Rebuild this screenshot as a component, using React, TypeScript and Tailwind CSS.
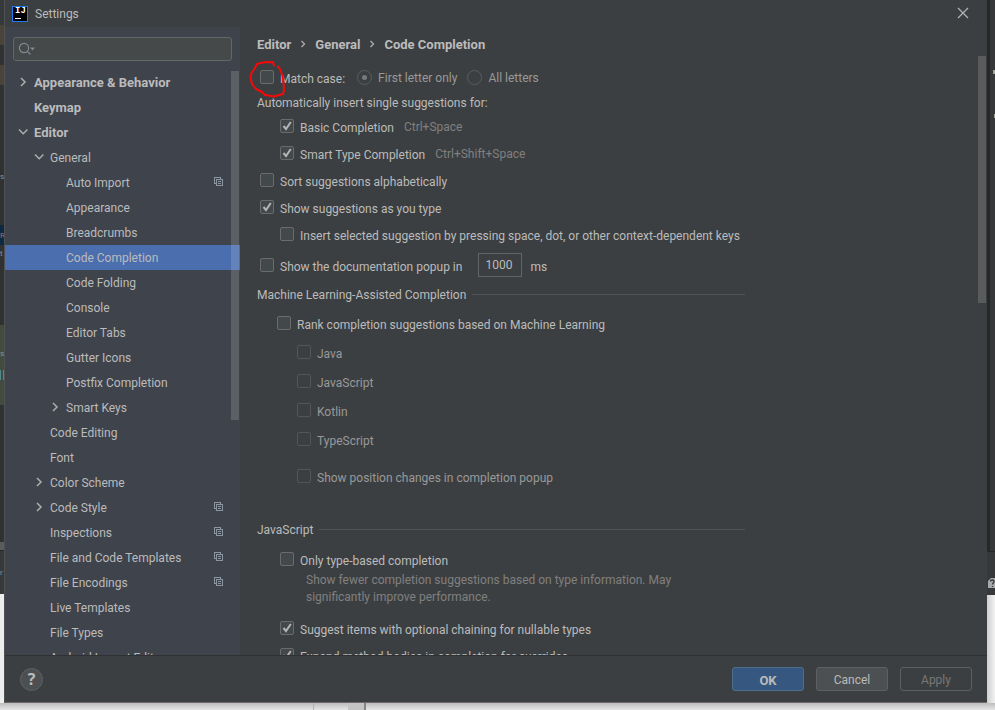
import type { ReactNode } from "react";

type TreeItem = {
  label: string;
  level: 0 | 1 | 2;
  arrow?: "open" | "closed";
  selected?: boolean;
  perProject?: boolean;
};

const treeItems: TreeItem[] = [
  { label: "Appearance & Behavior", level: 0, arrow: "closed" },
  { label: "Keymap", level: 0 },
  { label: "Editor", level: 0, arrow: "open" },
  { label: "General", level: 1, arrow: "open" },
  { label: "Auto Import", level: 2, perProject: true },
  { label: "Appearance", level: 2 },
  { label: "Breadcrumbs", level: 2 },
  { label: "Code Completion", level: 2, selected: true },
  { label: "Code Folding", level: 2 },
  { label: "Console", level: 2 },
  { label: "Editor Tabs", level: 2 },
  { label: "Gutter Icons", level: 2 },
  { label: "Postfix Completion", level: 2 },
  { label: "Smart Keys", level: 2, arrow: "closed" },
  { label: "Code Editing", level: 1 },
  { label: "Font", level: 1 },
  { label: "Color Scheme", level: 1, arrow: "closed" },
  { label: "Code Style", level: 1, arrow: "closed", perProject: true },
  { label: "Inspections", level: 1, perProject: true },
  { label: "File and Code Templates", level: 1, perProject: true },
  { label: "File Encodings", level: 1, perProject: true },
  { label: "Live Templates", level: 1 },
  { label: "File Types", level: 1 },
  { label: "Android Layout Editor", level: 1 },
];

const indents = ["pl-3", "pl-7", "pl-11"];

function Arrow({ dir }: { dir: "open" | "closed" }) {
  return (
    <svg width="12" height="12" viewBox="0 0 12 12" fill="none" stroke="#adadad" strokeWidth="1.5">
      <path d={dir === "open" ? "M2 3.5 6.2 7.7 10.4 3.5" : "M4 2 8 6 4 10"} />
    </svg>
  );
}

function ProjectIcon() {
  return (
    <svg width="9" height="9" viewBox="0 0 9 9" fill="none" stroke="#8b959f" shapeRendering="crispEdges">
      <path d="M2 6.5H.5V.5H6.5V2" />
      <path d="M2.5 2.5H8.5V8.5H2.5ZM4 4.5H7M4 6.5H7" />
    </svg>
  );
}

function TreeRow({ item }: { item: TreeItem }) {
  return (
    <li>
      <a
        href="#"
        className={`flex h-[25px] items-center pr-[17px] ${indents[item.level]} ${item.selected ? "bg-[#4b6eaf]" : ""}`}
      >
        <span className="mb-0.5 w-[17px] shrink-0">{item.arrow && <Arrow dir={item.arrow} />}</span>
        <span className={`flex-1 whitespace-nowrap ${item.level === 0 ? "text-[13px] font-bold" : "pt-0.5"}`}>
          {item.label}
        </span>
        {item.perProject && (
          <span className="mb-0.5">
            <ProjectIcon />
          </span>
        )}
      </a>
    </li>
  );
}

type CheckProps = {
  children: ReactNode;
  checked?: boolean;
  disabled?: boolean;
  className?: string;
};

function Check({ children, checked, disabled, className = "h-[27px]" }: CheckProps) {
  return (
    <label className={`flex items-center gap-1.5 whitespace-nowrap ${disabled ? "text-[#999999]" : ""} ${className}`}>
      <span className="mb-[3px] grid">
        <input
          type="checkbox"
          defaultChecked={checked}
          disabled={disabled}
          className="peer col-start-1 row-start-1 size-3.5 appearance-none rounded-[2px] border border-[#6b6b6b] bg-[#43494a] disabled:border-[#545556] disabled:bg-[#3c3f41]"
        />
        <svg
          viewBox="0 0 14 14"
          fill="none"
          stroke="#b4b4b4"
          strokeWidth="2"
          className="pointer-events-none invisible col-start-1 row-start-1 size-3.5 peer-checked:visible"
        >
          <path d="M3.5 7 6 10 10.8 3" />
        </svg>
      </span>
      <span className="pt-0.5">{children}</span>
    </label>
  );
}

function Radio({ label, checked }: { label: string; checked?: boolean }) {
  return (
    <label className="flex items-center gap-1.5 whitespace-nowrap text-[#999999]">
      <span className="mb-0.5 grid place-items-center">
        <input
          type="radio"
          name="match-case"
          defaultChecked={checked}
          disabled
          className="peer col-start-1 row-start-1 size-[15px] appearance-none rounded-full border border-[#5a5d5e]"
        />
        <span className="invisible col-start-1 row-start-1 size-[5px] rounded-full bg-[#777a7b] peer-checked:visible" />
      </span>
      {label}
    </label>
  );
}

function SectionTitle({ children }: { children: ReactNode }) {
  return (
    <h2 className="flex h-[23px] items-center gap-1.5 whitespace-nowrap">
      <span className="pt-0.5">{children}</span>
      <span className="h-px flex-1 bg-[#505354]" />
    </h2>
  );
}

function Logo() {
  return (
    <span className="flex size-4 flex-col justify-between border border-[#1a7df0] bg-black px-0.5 pb-0.5">
      <span className="font-['Liberation_Mono',monospace] text-[9px] leading-[9px] font-bold text-white">IJ</span>
      <span className="h-px w-1.5 bg-white" />
    </span>
  );
}

// Sliver of the editor window that shows to the left of the dialog.
function LeftEdge() {
  return (
    <div
      className="flex w-1 shrink-0 flex-col overflow-hidden bg-[#2f3133] text-[8px] text-[#8d9194]"
      aria-hidden="true"
    >
      <div className="h-[25px] shrink-0 bg-[#36393b]" />
      <div className="h-5 shrink-0 bg-[#49433a]" />
      <div className="h-5 shrink-0" />
      <div className="h-5 shrink-0 bg-[#49433a]" />
      <div className="flex h-[140px] shrink-0 items-end pb-10">s</div>
      <div className="flex h-5 shrink-0 items-center bg-[#0e2a43] text-[#c25c66]">R</div>
      <div className="flex h-20 shrink-0">t</div>
      <div className="flex h-20 shrink-0 flex-col bg-[#424c3e] pt-5">
        <span className="flex h-[25px]">s</span>
        <span className="flex h-2.5 gap-0.5">
          <span className="w-px bg-[#4f8b91]" />
          <span className="w-px bg-[#4f8b91]" />
        </span>
      </div>
      <div className="h-[137px] shrink-0" />
      <div className="h-2 shrink-0 bg-[#595b5d]" />
      <div className="flex h-11 shrink-0 items-center border-t border-[#232527] bg-[#36393b]">r</div>
      <div className="flex-1 bg-[#ededed]" />
    </div>
  );
}

function RightEdge() {
  return (
    <div className="flex w-2 shrink-0 flex-col bg-[#36383a]" aria-hidden="true">
      <div className="flex h-[551px] shrink-0 flex-col border-l-[3px] border-[#262727] pt-[70px]">
        <span className="ml-auto h-1 w-0.5 bg-[#a0a39c]" />
        <span className="mt-10 ml-auto h-1 w-px bg-[#a0a39c]" />
      </div>
      <div className="flex h-11 shrink-0 flex-col items-end justify-end border-t border-[#262727] pb-1.5">
        <svg width="8" height="12" viewBox="0 0 8 12">
          <path d="M1 11V4L4 1H8V11Z" fill="#a7a9aa" />
          <path d="M3.5 4.5C3.5 2.5 7 2.5 7 4.5 7 6 5.5 6 5.5 7.5M5.5 9V10" fill="none" stroke="#36383a" strokeWidth="1.3" />
        </svg>
      </div>
      <div className="flex-1 bg-linear-to-r from-[#d0d0d0] to-[#f2f2f2]" />
    </div>
  );
}

function Sidebar() {
  return (
    <aside className="relative flex w-[235px] shrink-0 flex-col bg-[#3f434c] pt-2.5">
      <div className="mx-2 flex h-6 shrink-0 items-center rounded-[3px] border border-[#646767] bg-[#45494a] pl-1">
        <svg width="18" height="14" viewBox="0 0 18 14" fill="none" stroke="#7f8a91" strokeWidth="1.2">
          <circle cx="6" cy="6" r="4.6" />
          <path d="M9.3 9.3 12.5 12.5" />
          <path d="M12 5.5H17L14.5 8.5Z" fill="#7f8a91" stroke="none" />
        </svg>
        <input type="text" aria-label="Search settings" className="min-w-0 flex-1 bg-transparent outline-none" />
      </div>
      <nav className="mt-[9px] min-h-0 flex-1 overflow-hidden">
        <ul>
          {treeItems.map((item) => (
            <TreeRow key={item.label} item={item} />
          ))}
        </ul>
      </nav>
      <div className="absolute top-11 right-px h-[349px] w-2 bg-white/15" />
    </aside>
  );
}

function Crumb({ children }: { children: ReactNode }) {
  return (
    <>
      <li>{children}</li>
      <li aria-hidden="true" className="mb-0.5">
        <svg width="6" height="8" viewBox="0 0 6 8" fill="none" stroke="#adadad" strokeWidth="1.3">
          <path d="M1.5 1 4.5 4 1.5 7" />
        </svg>
      </li>
    </>
  );
}

function CompletionPage() {
  return (
    <main className="relative min-w-0 flex-1 overflow-hidden pl-[17px]">
      <ol className="flex h-[37px] items-center gap-[9px] pb-0.5 text-[13px] font-bold whitespace-nowrap">
        <Crumb>Editor</Crumb>
        <Crumb>General</Crumb>
        <li>Code Completion</li>
      </ol>

      <div className="max-w-[488px]">
        <div className="relative flex items-center pl-[3px]">
          <Check className="h-7">Match case:</Check>
          <div className="ml-3 flex gap-2.5">
            <Radio label="First letter only" checked />
            <Radio label="All letters" />
          </div>
          <svg
            width="40"
            height="40"
            viewBox="0 0 40 40"
            fill="none"
            stroke="#f80808"
            strokeWidth="2"
            strokeLinecap="round"
            strokeLinejoin="round"
            className="pointer-events-none absolute -top-1 -left-2"
          >
            <path d="M25 5.5 24 2 15 2.2 8 4 6 8 2.5 13 1.5 18 3 24 7 29 13 32 16 35 25 36.5 34 34 35 31 34.5 22 33.5 16 31 9 29 6.5" />
          </svg>
        </div>

        <p className="h-[22px] leading-[22px]">Automatically insert single suggestions for:</p>
        <div className="flex items-center gap-2.5 pl-[23px]">
          <Check checked>Basic Completion</Check>
          <span className="text-[#808080]">Ctrl+Space</span>
        </div>
        <div className="flex items-center gap-2.5 pl-[23px]">
          <Check checked>Smart Type Completion</Check>
          <span className="text-[#808080]">Ctrl+Shift+Space</span>
        </div>
        <div className="pl-[3px]">
          <Check>Sort suggestions alphabetically</Check>
          <Check checked>Show suggestions as you type</Check>
        </div>
        <div className="pl-[23px]">
          <Check>Insert selected suggestion by pressing space, dot, or other context-dependent keys</Check>
        </div>
        <div className="flex h-[34px] items-center gap-2 pl-[3px]">
          <Check className="mr-2 h-[27px]">Show the documentation popup in</Check>
          <input
            type="text"
            defaultValue="1000"
            aria-label="Documentation popup delay"
            className="mb-0.5 h-6 w-11 border border-[#646464] bg-transparent px-1.5"
          />
          <span className="pt-0.5">ms</span>
        </div>

        <SectionTitle>Machine Learning-Assisted Completion</SectionTitle>
        <div className="mt-1 pl-5">
          <Check className="h-[29px]">Rank completion suggestions based on Machine Learning</Check>
          <div className="pl-5">
            <Check disabled className="h-[29px]">Java</Check>
            <Check disabled className="h-[29px]">JavaScript</Check>
            <Check disabled className="h-[29px]">Kotlin</Check>
            <Check disabled className="h-[29px]">TypeScript</Check>
            <Check disabled className="mt-2 h-[29px]">Show position changes in completion popup</Check>
          </div>
        </div>

        <div className="mt-[26px]">
          <SectionTitle>JavaScript</SectionTitle>
        </div>
        <div className="mt-2 pl-[23px]">
          <Check className="h-[23px]">Only type-based completion</Check>
          <p className="mb-2.5 max-w-[410px] pl-[26px] leading-[17px] text-[#808080]">
            Show fewer completion suggestions based on type information. May significantly improve performance.
          </p>
          <Check checked>Suggest items with optional chaining for nullable types</Check>
          <Check checked>Expand method bodies in completion for overrides</Check>
        </div>
      </div>

      <div className="absolute top-[29px] right-px h-[247px] w-2 bg-[#595b5d]" />
    </main>
  );
}

export default function App() {
  return (
    <div className="flex h-screen flex-col overflow-hidden bg-[#e4e4e4] font-['Roboto','Noto_Sans_CJK_KR',sans-serif] text-[12px] leading-[17px] text-[#bbbbbb]">
      <div className="flex min-h-0 flex-1">
        <LeftEdge />
        <div className="flex min-w-0 flex-1 flex-col border-b border-l border-b-[#6f696a] border-l-[#4f5152] bg-[#3c3f41]">
          <header className="flex h-[27px] shrink-0 items-center gap-[7px] pr-[18px] pl-[7px]">
            <Logo />
            <h1 className="flex-1 pt-0.5">Settings</h1>
            <button type="button" aria-label="Close" className="mb-0.5">
              <svg width="12" height="12" viewBox="0 0 12 12" stroke="#b4b4b4" strokeWidth="1.2">
                <path d="M1 1 11 11M11 1 1 11" />
              </svg>
            </button>
          </header>

          <div className="flex min-h-0 flex-1">
            <Sidebar />
            <CompletionPage />
          </div>

          <footer className="flex h-[47px] shrink-0 items-center gap-3 border-t border-[#2f3133] pr-[15px] pl-[15px]">
            <button
              type="button"
              aria-label="Help"
              className="mr-auto size-[23px] rounded-full border border-[#5e6162] bg-[#4c5052] font-['Open_Sans',sans-serif] text-base leading-[21px] font-bold"
            >
              ?
            </button>
            <button
              type="button"
              className="h-6 w-[72px] rounded-[3px] border border-[#4c708c] bg-[#365880] pt-0.5 text-[13px] font-bold"
            >
              OK
            </button>
            <button type="button" className="h-6 w-[72px] rounded-[3px] border border-[#5e6060] bg-[#4c5052] pt-0.5">
              Cancel
            </button>
            <button
              type="button"
              disabled
              className="h-6 w-[72px] rounded-[3px] border border-[#5e6060] pt-0.5 text-[#777777]"
            >
              Apply
            </button>
          </footer>
        </div>
        <RightEdge />
      </div>
      <div className="flex h-[7px] shrink-0 bg-linear-to-b from-[#bdbdbd] to-[#e6e6e6]" aria-hidden="true">
        <div className="w-[314px] border-r border-[#b4b4b4]" />
        <div className="w-[34px]" />
        <div className="w-[18px] border-r-2 border-[#858585] bg-[#c4c4c4]" />
      </div>
    </div>
  );
}
